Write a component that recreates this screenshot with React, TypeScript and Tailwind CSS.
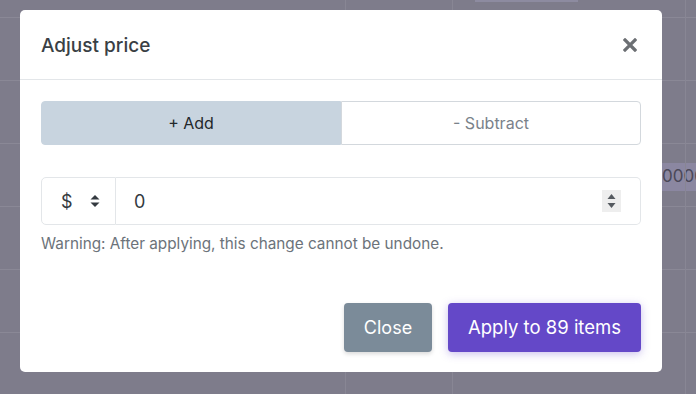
import { useState } from "react";

const rows = [0, 1, 2, 3, 4, 5, 6];

function CloseIcon() {
  return (
    <svg width="14" height="14" viewBox="0 0 14 14" aria-hidden="true">
      <path d="M2 2L12 12M12 2L2 12" stroke="#6c6f73" strokeWidth="3.2" strokeLinecap="square" />
    </svg>
  );
}

function Caret({ size = 10 }: { size?: number }) {
  return (
    <svg width={size} height={size + 4} viewBox="0 0 10 14" aria-hidden="true">
      <path d="M5 1L9.5 5.5H0.5Z" fill="#343a40" />
      <path d="M5 13L9.5 8.5H0.5Z" fill="#343a40" />
    </svg>
  );
}

export default function App() {
  const [mode, setMode] = useState<"add" | "subtract">("add");
  const [amount, setAmount] = useState("0");

  return (
    <div
      className="relative h-[394px] w-[696px] overflow-hidden bg-[#7e7c8b]"
      style={{ fontFamily: "Inter, 'Noto Sans', sans-serif" }}
    >
      {/* table under the overlay */}
      <div className="pt-[17px]">
        {rows.map((r) => (
          <div key={r} className="relative h-[63px] border-t border-[#8a8896]">
            {r === 2 && (
              <div className="absolute left-[662px] top-[19px] flex h-[28px] w-[34px] items-center overflow-hidden whitespace-nowrap bg-[#8b87a1] text-[17px] text-[#4a4858]">
                00003
              </div>
            )}
          </div>
        ))}
      </div>
      <div className="absolute left-[345px] top-0 h-full w-px bg-[#888694]" />
      <div className="absolute left-[452px] top-0 h-full w-px bg-[#888694]" />
      <div className="absolute left-[685px] top-0 h-full w-px bg-[#888694]" />
      <div className="absolute left-[475px] top-0 h-[2px] w-[103px] bg-[#8d8ba0]" />

      {/* modal */}
      <div className="absolute left-[20px] top-[10px] flex h-[362px] w-[642px] flex-col rounded-[5px] bg-white">
        <div className="flex h-[70px] shrink-0 items-center justify-between border-b border-[#e3e6e9] pl-[21px] pr-[24px]">
          <h2 className="mt-[3px] text-[19px] font-medium text-[#3a3f45]">Adjust price</h2>
          <button type="button" className="flex h-[16px] w-[16px] items-center justify-center">
            <CloseIcon />
          </button>
        </div>

        <div className="flex flex-1 flex-col px-[21px] pt-[21px] pb-[20px]">
          <div className="flex h-[44px]">
            <button
              type="button"
              onClick={() => setMode("add")}
              className={`flex flex-1 items-center justify-center rounded-l-[4px] border text-[16px] ${
                mode === "add"
                  ? "border-[#c8d4df] bg-[#c8d4df] text-[#23272b]"
                  : "border-[#ced4da] bg-white text-[#7a828a]"
              }`}
            >
              + Add
            </button>
            <button
              type="button"
              onClick={() => setMode("subtract")}
              className={`flex flex-1 items-center justify-center rounded-r-[4px] border text-[16px] ${
                mode === "subtract"
                  ? "border-[#c8d4df] bg-[#c8d4df] text-[#23272b]"
                  : "border-[#d3d8dd] bg-white text-[#7a828a]"
              }`}
            >
              - Subtract
            </button>
          </div>

          <div className="mt-[32px] flex h-[48px]">
            <div className="flex w-[75px] items-center rounded-l-[5px] border border-[#e3e6e9] pl-[19px] text-[18px] text-[#343a40]">
              <span>$</span>
              <span className="ml-[17px] flex items-center">
                <Caret />
              </span>
            </div>
            <div className="flex flex-1 items-center rounded-r-[5px] border border-l-0 border-[#e3e6e9] pl-[18px] pr-[19px]">
              <input
                value={amount}
                onChange={(e) => setAmount(e.currentTarget.value)}
                className="min-w-0 flex-1 bg-transparent text-[18px] text-[#343a40] outline-none"
              />
              <span className="flex h-[22px] w-[19px] flex-col items-center justify-center gap-[3px] bg-[#eeeeee]">
                <svg width="9" height="16" viewBox="0 0 9 16" aria-hidden="true">
                  <path d="M4.5 1L8.5 6H0.5Z" fill="#555a60" />
                  <path d="M4.5 15L8.5 10H0.5Z" fill="#555a60" />
                </svg>
              </span>
            </div>
          </div>

          <p className="mt-[8px] text-[15.3px] text-[#6c737a]">
            Warning: After applying, this change cannot be undone.
          </p>

          <div className="mt-auto flex justify-end gap-[16px]">
            <button
              type="button"
              className="h-[49px] w-[88px] rounded-[4px] bg-[#7b8b99] text-[18px] text-white shadow-[0_2px_4px_rgba(0,0,0,0.15)]"
            >
              Close
            </button>
            <button
              type="button"
              className="h-[49px] w-[193px] rounded-[4px] bg-[#6448c8] text-[18.5px] text-white shadow-[0_2px_8px_rgba(100,72,200,0.35)]"
            >
              Apply to 89 items
            </button>
          </div>
        </div>
      </div>
    </div>
  );
}
